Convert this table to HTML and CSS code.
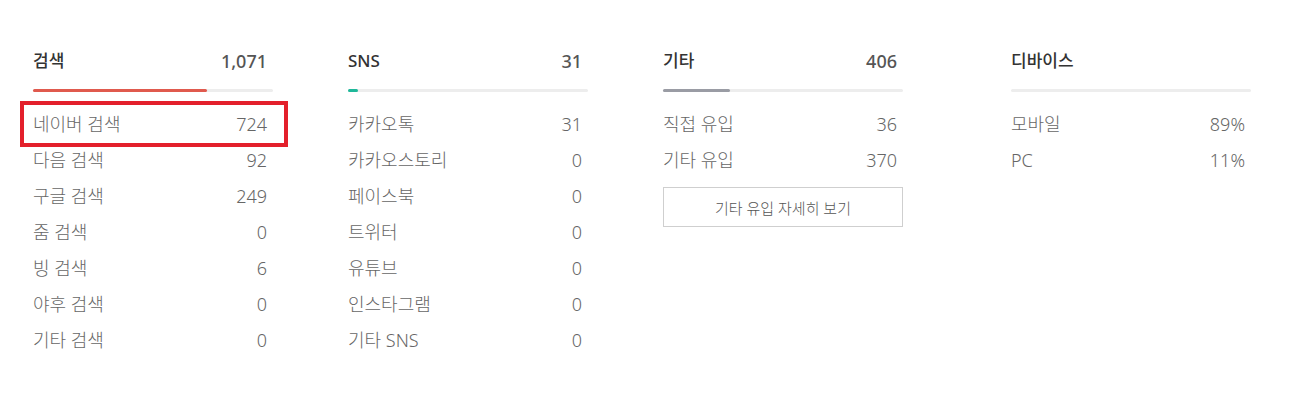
FILE: index.html
```html
<!DOCTYPE html>
<html lang="ko">
<head>
<meta charset="utf-8">
<link rel="stylesheet" href="styles.css">
</head>
<body>
<div class="stats">
  <section class="col">
    <div class="head"><span class="title">검색</span><span class="total">1,071</span></div>
    <div class="bar"><div class="fill red" style="width:72.5%"></div></div>
    <ul class="rows">
      <li class="row hl"><span>네이버 검색</span><span>724</span></li>
      <li class="row"><span>다음 검색</span><span>92</span></li>
      <li class="row"><span>구글 검색</span><span>249</span></li>
      <li class="row"><span>줌 검색</span><span>0</span></li>
      <li class="row"><span>빙 검색</span><span>6</span></li>
      <li class="row"><span>야후 검색</span><span>0</span></li>
      <li class="row"><span>기타 검색</span><span>0</span></li>
    </ul>
  </section>
  <section class="col">
    <div class="head"><span class="title">SNS</span><span class="total">31</span></div>
    <div class="bar"><div class="fill green" style="width:4%"></div></div>
    <ul class="rows">
      <li class="row"><span>카카오톡</span><span>31</span></li>
      <li class="row"><span>카카오스토리</span><span>0</span></li>
      <li class="row"><span>페이스북</span><span>0</span></li>
      <li class="row"><span>트위터</span><span>0</span></li>
      <li class="row"><span>유튜브</span><span>0</span></li>
      <li class="row"><span>인스타그램</span><span>0</span></li>
      <li class="row"><span>기타 SNS</span><span>0</span></li>
    </ul>
  </section>
  <section class="col">
    <div class="head"><span class="title">기타</span><span class="total">406</span></div>
    <div class="bar"><div class="fill gray" style="width:28%"></div></div>
    <ul class="rows">
      <li class="row"><span>직접 유입</span><span>36</span></li>
      <li class="row"><span>기타 유입</span><span>370</span></li>
    </ul>
    <button class="more" type="button">기타 유입 자세히 보기</button>
  </section>
  <section class="col last">
    <div class="head"><span class="title">디바이스</span></div>
    <div class="bar"></div>
    <ul class="rows">
      <li class="row"><span>모바일</span><span>89%</span></li>
      <li class="row"><span>PC</span><span>11%</span></li>
    </ul>
  </section>
</div>
</body>
</html>
```

FILE: styles.css
```css
*, *::before, *::after { box-sizing: border-box; }
body {
  margin: 0;
  background: #fff;
  font-family: "Noto Sans", "Noto Sans CJK KR", sans-serif;
  color: #666;
}
.stats {
  display: flex;
  gap: 75px;
  padding: 49px 0 0 33px;
}
.col {
  width: 240px;
  flex: none;
}
.col.last { margin-left: 33px; }
.head {
  display: flex;
  justify-content: space-between;
  align-items: center;
  height: 24px;
  padding-right: 6px;
  line-height: 24px;
}
.title {
  font-size: 17px;
  font-weight: 500;
  color: #333;
}
.total {
  font-size: 18px;
  font-weight: 500;
  color: #555;
}
.bar {
  margin-top: 16px;
  height: 3px;
  background: #ededed;
  border-radius: 2px;
}
.fill {
  height: 3px;
  border-radius: 2px;
}
.fill.red { background: #e05a4e; }
.fill.green { background: #1fb89a; }
.fill.gray { background: #9a9ca4; }
.rows {
  list-style: none;
  margin: 14px 0 0;
  padding: 0;
}
.row {
  position: relative;
  display: flex;
  justify-content: space-between;
  height: 36px;
  line-height: 36px;
  padding-right: 6px;
  font-size: 18px;
  font-weight: 300;
  color: #666;
}
.row.hl::after {
  content: "";
  position: absolute;
  left: -13px;
  top: -5px;
  width: 268px;
  height: 46px;
  border: 4px solid #e3202b;
}
.more {
  display: block;
  width: 240px;
  height: 40px;
  margin-top: 9px;
  border: 1px solid #cfcfcf;
  background: #fff;
  font-family: inherit;
  font-size: 15px;
  font-weight: 300;
  color: #555;
  cursor: pointer;
}
```
